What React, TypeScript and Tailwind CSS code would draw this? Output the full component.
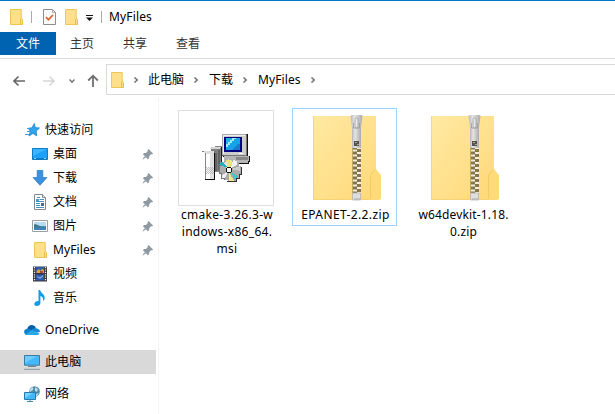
import type { ReactNode } from "react";

function Folder({ className = "" }: { className?: string }) {
  return (
    <svg viewBox="0 0 13 16" className={`h-4 w-[13px] shrink-0 ${className}`}>
      <path d="M.5 .5H11.2V15.5H.5Z" fill="#ffe08a" stroke="#edc657" />
      <path d="M10.5 15.5V10.5l1-1.2 1 1.2v5z" fill="#ffe08a" stroke="#e8bd48" />
    </svg>
  );
}

function Chevron({ down = false }: { down?: boolean }) {
  return (
    <svg viewBox="0 0 6 6" className="h-1.5 w-1.5 shrink-0">
      <path d={down ? "M.5 1.5 3 4.2 5.5 1.5" : "M1.5 .5 4.2 3 1.5 5.5"} fill="none" stroke="#707070" strokeWidth="1.5" />
    </svg>
  );
}

function Pin() {
  return (
    <svg viewBox="0 0 11 11" className="h-[11px] w-[11px] shrink-0">
      <path d="M6.6 0 11 4.4 10 5.5 9 5.3 7.2 7.2 7.1 9.2 5.9 10.2 3.9 8.2 .9 10.6 .4 10.1 2.9 7.2 .9 5.2 2 4 4 3.9 5.9 2.1 5.6 1Z" fill="#8f9aa3" />
    </svg>
  );
}

const icons: Record<string, ReactNode> = {
  quick: (
    <svg viewBox="0 0 16 16" className="h-4 w-4">
      <path d="M10.3 1.5 11.2 5.6 15.5 6 12.2 9l.5 4.8-3.8-2.4L5 14l1.4-4.8L4.2 6.3l3.7-.5z" fill="#2fa4ef" stroke="#1a82cd" strokeWidth=".8" />
      <path d="M3 6.5h3M3 9.5h3M1.2 12.5h4" stroke="#3d9fdc" strokeWidth="1" />
    </svg>
  ),
  desktop: (
    <svg viewBox="0 0 16 16" className="h-4 w-4">
      <path d="M.5 2.5h15v11H.5z" fill="#1ba1f8" stroke="#087bc9" />
      <path d="M1 10 15 3V3H1z" fill="#3bb3ff" />
      <path d="M1 12.5h14" stroke="#0877c8" />
      <path d="M2 12.5h2M12 12.5h2" stroke="#a8dcff" />
    </svg>
  ),
  download: (
    <svg viewBox="0 0 16 16" className="h-4 w-4">
      <path d="M5.2.5h5.6v7h4.1L8 15.3 1.1 7.5h4.1z" fill="#3b91df" stroke="#2576bd" strokeWidth=".7" />
    </svg>
  ),
  docs: (
    <svg viewBox="0 0 16 16" className="h-4 w-4">
      <path d="M2.5.5h8l3 3v12h-11z" fill="#fff" stroke="#85898c" />
      <path d="M10.5.5v3h3" fill="#e3e6e8" stroke="#85898c" />
      <path d="M5 3.5h3M7.5 5.5H12M4 7.5h8M4 9.5h4M4 11.5h4M4 13.5h8" stroke="#4691bd" />
      <path d="M4 5h3v2H4z" fill="#4c9cce" />
      <path d="M9 9h3v3H9z" fill="#3f6f90" />
    </svg>
  ),
  pictures: (
    <svg viewBox="0 0 16 16" className="h-4 w-4">
      <path d="M.5 2.5h15v11H.5z" fill="#fff" stroke="#9b9fa2" />
      <path d="M2 4h12v8H2z" fill="#b7dcf2" />
      <path d="M2 6.5c3-1 4 1.5 7 1.7s3 .2 5 0V12H2z" fill="#3e7890" />
      <path d="M2 10c5-1 8 0 12-1v3H2z" fill="#3b84bd" />
    </svg>
  ),
  folder: <Folder className="ml-[2px]" />,
  video: (
    <svg viewBox="0 0 16 16" className="h-4 w-4">
      <path d="M1 .5h14v15H1z" fill="#373737" />
      <path d="M4 1h8v6H4zM4 8.5h8v6H4z" fill="#3059a7" />
      <path d="M4.5 5 7 3l1.5 2L10 2.5l2 2V7H4.5z" fill="#d9a83d" />
      <path d="m5 10 3 1 3-2v2l-3 2-3-2z" fill="#69a2dd" />
      <path d="M8 5h3v2H8z" fill="#b2473b" />
      <path d="M2.5 1v14M13.5 1v14" stroke="#eee" strokeWidth="1.3" strokeDasharray="1.2 1.2" />
    </svg>
  ),
  music: (
    <svg viewBox="0 0 16 16" className="h-4 w-4">
      <path d="M6.5 0h1.7c.2 3 4.8 4 4.5 8-.1 1.4-1 2.6-1.7 3.1.5-2.7-.3-4.3-2.6-5V13c0 1.8-1.8 3-3.5 3-1.8 0-2.8-1-2.6-2.3.2-1.8 2.2-3 4.2-2.8z" fill="#119be9" />
    </svg>
  ),
  onedrive: (
    <svg viewBox="0 0 16 16" className="h-4 w-4">
      <path d="M3.2 7C4.2 2 10.4 1.6 12 6.3L7 10z" fill="#0b5da9" />
      <path d="M.8 11.9C-1 9.2 1 6.5 3.7 6.8 5 6.5 6 7.1 8.6 9L5 12.8H2.7A3 3 0 0 1 .8 12z" fill="#1380ce" />
      <path d="M7.3 8.2c1.6-2 3.4-2.3 4.9-1.9C14.5 6.6 16 8 16 10.1L11 11z" fill="#188ad8" />
      <path d="m1.4 12.5 6.2-4.3 7.9 3.2c-.7 1.2-1.7 1.6-2.8 1.6H3.2c-.7 0-1.3-.2-1.8-.5z" fill="#2aa9e9" />
    </svg>
  ),
  pc: (
    <svg viewBox="0 0 16 16" className="h-4 w-4">
      <path d="M.5 1.5h15v9.7H.5z" fill="#43b8ff" stroke="#397c9f" />
      <path d="m1 9 12-7H1z" fill="#70cbff" />
      <path d="M4 12.5h8" stroke="#698894" />
      <path d="M0 15.3h16" stroke="#8098a7" />
    </svg>
  ),
  network: (
    <svg viewBox="0 0 16 16" className="h-4 w-4">
      <circle cx="10.5" cy="5.5" r="5.3" fill="#4d87aa" />
      <path d="M7 2c2-2 3 1 2 2L6 6l-.5-2zm4-1 3 2-1 3-2-1zm1 7 3-1-2 3h-1z" fill="#b8dce8" />
      <path d="M.5 6.5h11v7H.5z" fill="#43b8f9" stroke="#287cab" />
      <path d="m1 12 8-5H1z" fill="#77d1ff" />
      <path d="M6 13.5v2M3 15.5h6" stroke="#4386a8" />
    </svg>
  ),
};

function NavItem({ icon, label, indent = false, pinned = false, selected = false }: {
  icon: string; label: string; indent?: boolean; pinned?: boolean; selected?: boolean;
}) {
  return (
    <div className={`flex h-6 w-[156px] items-center gap-[5px] pr-[3px] ${indent ? "pl-8" : "pl-6"} ${selected ? "bg-[#d9d9d9]" : ""}`}>
      <span className="flex h-4 w-4 shrink-0">{icons[icon]}</span>
      <span className="flex-1 whitespace-nowrap tracking-[0.1px]">{label}</span>
      {pinned && <Pin />}
    </div>
  );
}

function InstallerIcon() {
  return (
    <svg viewBox="0 0 48 48" className="h-12 w-12" shapeRendering="crispEdges">
      <path d="M9 15l5-3h6v26h-7V18z" fill="#8b8b8b" />
      <path d="M9 14h9v-2h2v26h-7V18H9z" fill="#808080" />
      <path d="M9 13h10v1H9zM8 14h10v1H8z" fill="#d4d4d4" />
      <path d="M13 19h2v18h-2zM16 16h2v20h-2z" fill="#626262" />
      <path d="M19 13h1v16h-1z" fill="#222" />
      <path d="M0 18h2v1h11v-1h1v-1H0z" fill="#777" />
      <path d="M2 17h10v2H2z" fill="#ddd" />
      <path d="M3 19h9v27H3z" fill="#e0e0e0" />
      <path d="M4 20h4v25H4z" fill="#fff" />
      <path d="M3 19v26" stroke="#888" />
      <path d="M3 45.5h9.5V19" stroke="#111" fill="none" />
      <path d="M4 33.5h8M4 35.5h8M4 37.5h8M4 39.5h8" stroke="#bbb" strokeDasharray="1 1" />
      <path d="M5 34.5h7M5 36.5h7M5 38.5h7" stroke="#bbb" strokeDasharray="1 1" />
      <path d="M20 0h26v22H20z" fill="#555" />
      <path d="M20 0h24v21H20z" fill="#ccc" />
      <path d="M20.5 21V.5H44" fill="none" stroke="#aaa" />
      <path d="M21.5 20V1.5H43" fill="none" stroke="#eee" />
      <path d="M44.5 1v20H21" fill="none" stroke="#777" />
      <path d="M45.5 0v22H21" fill="none" stroke="#111" />
      <path d="M22 3h18v15H22z" fill="#000080" />
      <path d="M24 4h14v12H24z" fill="#14a4e7" />
      <path d="M24 4h9l-9 10z" fill="#16b9d7" />
      <path d="M24 10h2V8h2V6h2V4h4v1h-2v2h-2v2h-2v2h-2v2h-2z" fill="#9ceced" />
      <path d="M31 16v-2h2v-2h2v-2h3v6z" fill="#167ccc" />
      <path d="M37 19.5h4" stroke="#fff" />
      <path d="M22 22h25v7H22z" fill="#b5b5b5" />
      <path d="M34 23h12v3H34z" fill="#888" />
      <path d="M35 29.5h11v-2h1.5V22" fill="none" stroke="#111" />
      <path d="M24 25h7v1h3v2h3v4h2v8h-2v4h-3v3h-8v-1h-4v-3h-3v-4h-2v-7h2v-4h4v-3z" fill="#ababab" />
      <path d="m27 36-8-7h3l4-4h1z" fill="#e7e6d7" />
      <path d="M24 26h6v6l-3 3z" fill="#e9e37c" />
      <path d="m26 34-9-3 3-4z" fill="#1fb4bd" />
      <path d="m29 34 2-8 4 1v4z" fill="#f0f0ec" />
      <path d="m29 35 9-3v5z" fill="#ccc" />
      <path d="m29 38 8 5-4 3z" fill="#42c5c8" />
      <path d="m27 38 5 9h-5z" fill="#eee98d" />
      <path d="m26 38-4 8-4-4z" fill="#efefef" />
      <path d="M24 34h1v-1h4v1h1v4h-1v1h-4v-1h-1z" fill="#111" />
      <path d="M25 34h4v4h-4z" fill="#fff" />
      <path d="M39.5 33v7h-2v4h-3v3h-10" fill="none" stroke="#333" />
      <path d="M17.5 32v7h2v5h3v2" fill="none" stroke="#777" />
    </svg>
  );
}

function ZipIcon({ id }: { id: string }) {
  return (
    <svg viewBox="0 0 68 86" className="ml-[5px] h-[86px] w-[68px]">
      <defs>
        <linearGradient id={`${id}-paper`} x1="0" x2="1" y1="0" y2="1">
          <stop stopColor="#ffe9a2" /><stop offset=".55" stopColor="#ffe08b" /><stop offset="1" stopColor="#ffd776" />
        </linearGradient>
        <linearGradient id={`${id}-metal`} x1="0" x2="1" y1="0" y2="0">
          <stop stopColor="#b8b8b8" /><stop offset=".35" stopColor="#e5e5e5" /><stop offset="1" stopColor="#aaa" />
        </linearGradient>
        <pattern id={`${id}-teeth`} width="8" height="5" patternUnits="userSpaceOnUse" x="40" y="34">
          <path d="M0 0h8v5H0z" fill="#85764e" />
          <path d="M0 .5h4v2H0zM4 3h4v2H4z" fill="#f3efdc" />
        </pattern>
      </defs>
      <path d="M0 1h63v53l5 8v20q0 3-3 3H0z" fill={`url(#${id}-paper)`} />
      <path d="M.5 1v83.5H58" fill="none" stroke="#f2cf70" strokeWidth=".7" />
      <path d="M57 85V60l5.5-6 5.5 6v22q0 3-3 3z" fill="#ffda79" />
      <path d="M57.5 84V60l5-6" fill="none" stroke="#f0c45e" strokeWidth=".7" />
      <path d="M39 33h9v45h-9z" fill={`url(#${id}-teeth)`} />
      <path d="M39.5 33v45" stroke="#c2a85e" />
      <path d="M37.5 1q.3-1 2-1h8.5q1.5 0 1.5 1L48 13h-9z" fill={`url(#${id}-metal)`} />
      <path d="M39 12h9v21h-9z" fill={`url(#${id}-metal)`} />
      <rect x="42" y="3" width="3" height="10" rx="1.5" fill="#e7e7e7" stroke="#8b8b8b" strokeWidth=".6" />
      <path d="M40.5 8v5h6V8" fill="none" stroke="#999" strokeWidth=".8" />
      <path d="M41 26h5v5h-5z" fill="#55534b" />
      <path d="M42 27h2v1h-2zM44 29h2v1h-2z" fill="#aaa998" />
      <path d="M39.5 78h8v7h-8z" fill="#dedede" stroke="#b1aea7" strokeWidth=".7" />
      <path d="M41 84h6" stroke="#aaa" />
    </svg>
  );
}

export default function App() {
  return (
    <div className="flex h-[414px] w-[615px] flex-col overflow-hidden bg-white font-['Noto_Sans','Noto_Sans_CJK_SC',sans-serif] text-xs leading-4 text-black">
      <header className="flex h-8 shrink-0 items-center border-t border-[#0078d0] pl-[10px]">
        <Folder />
        <div className="ml-2 h-3 w-px bg-[#aaa]" />
        <svg viewBox="0 0 13 16" className="ml-[11px] h-4 w-[13px]">
          <path d="M.5 .5h9l3 3v12H.5z" fill="#fafafa" stroke="#8d8d8d" />
          <path d="M9.5.5v3h3" fill="none" stroke="#aaa" />
          <path d="m3 8 2.4 2.7L10 6" fill="none" stroke="#e25e27" strokeWidth="1.7" />
        </svg>
        <Folder className="ml-[9px]" />
        <svg viewBox="0 0 7 6" className="ml-2 mt-[3px] h-1.5 w-[7px]"><path d="M0 0h7v1H0zM0 2.5h7L3.5 6z" fill="#111" /></svg>
        <div className="ml-2 h-3 w-px bg-[#aaa]" />
        <span className="ml-[7px] tracking-[0.15px]">MyFiles</span>
      </header>

      <nav className="flex h-[27px] shrink-0 items-start border-b border-[#dadbdc] text-[#333]">
        <span className="flex h-[23px] w-14 items-center justify-center bg-[#0063b1] text-white">文件</span>
        <span className="flex h-[23px] w-[53px] items-center justify-center pr-px">主页</span>
        <span className="flex h-[23px] w-[53px] items-center justify-center pr-px">共享</span>
        <span className="flex h-[23px] w-[53px] items-center justify-center pr-px">查看</span>
      </nav>

      <div className="flex h-[39px] shrink-0 pt-[5px]">
        <div className="flex w-[106px] items-center pl-[13px]">
          <svg viewBox="0 0 12 12" className="h-3 w-3"><path d="M12 6H1M5.5 1.5 1 6l4.5 4.5" fill="none" stroke="#666" strokeWidth="1.6" /></svg>
          <svg viewBox="0 0 12 12" className="ml-[18px] h-3 w-3"><path d="M0 6h11M6.5 1.5 11 6l-4.5 4.5" fill="none" stroke="#d5d5d5" strokeWidth="1.5" /></svg>
          <span className="ml-[14px] flex"><Chevron down /></span>
          <svg viewBox="0 0 12 14" className="ml-3 h-3.5 w-3"><path d="M6 13V2M1.2 6.5 6 1.7l4.8 4.8" fill="none" stroke="#707070" strokeWidth="1.8" /></svg>
        </div>
        <div className="flex h-[31px] flex-1 items-center border border-r-0 border-[#d9d9d9] pl-1">
          <Folder />
          <span className="ml-[9px] flex"><Chevron /></span>
          <span className="ml-[9px] w-9">此电脑</span>
          <span className="ml-[9px] flex"><Chevron /></span>
          <span className="ml-[10px] w-6">下载</span>
          <span className="ml-[9px] flex"><Chevron /></span>
          <span className="ml-[10px] w-[43px] tracking-[0.1px]">MyFiles</span>
          <span className="ml-[9px] flex"><Chevron /></span>
        </div>
      </div>

      <div className="flex min-h-0 flex-1">
        <aside className="w-[159px] shrink-0 border-r border-[#f4f4f4] pt-5">
          <NavItem icon="quick" label="快速访问" />
          <NavItem icon="desktop" label="桌面" indent pinned />
          <NavItem icon="download" label="下载" indent pinned />
          <NavItem icon="docs" label="文档" indent pinned />
          <NavItem icon="pictures" label="图片" indent pinned />
          <NavItem icon="folder" label="MyFiles" indent pinned />
          <NavItem icon="video" label="视频" indent />
          <NavItem icon="music" label="音乐" indent />
          <div className="mt-2"><NavItem icon="onedrive" label="OneDrive" /></div>
          <div className="mt-2"><NavItem icon="pc" label="此电脑" selected /></div>
          <div className="mt-2"><NavItem icon="network" label="网络" /></div>
        </aside>
        <main className="flex items-start pl-[14px] pt-[10px] text-center leading-[17px] tracking-[0.3px]">
          <div className="flex w-[105px] flex-col items-center pt-0.5">
            <div className="flex h-24 w-24 items-center justify-center border border-[#dedede]"><InstallerIcon /></div>
            <div className="whitespace-nowrap pl-[3px]">cmake-3.26.3-w<br />indows-x86_64.<br />msi</div>
          </div>
          <div className="ml-[14px] flex h-[118px] w-[105px] flex-col items-center border border-[#99d1ff] pt-[6px]">
            <ZipIcon id="epanet" />
            <div className="mt-[5px] whitespace-nowrap pl-0.5 tracking-[0.38px]">EPANET-2.2.zip</div>
          </div>
          <div className="ml-[13px] flex w-[105px] flex-col items-center pt-[7px]">
            <ZipIcon id="devkit" />
            <div className="mt-[5px] whitespace-nowrap pl-0.5 tracking-[0.15px]">w64devkit-1.18.<br />0.zip</div>
          </div>
        </main>
      </div>
    </div>
  );
}
